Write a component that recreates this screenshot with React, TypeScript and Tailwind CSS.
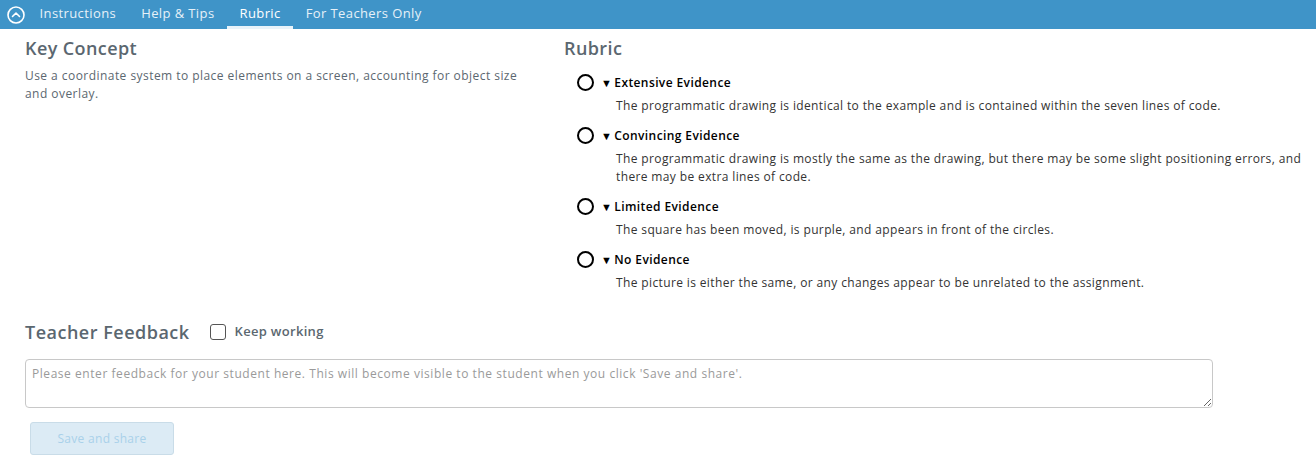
import React from 'react';

const rubric = [
  {
    title: 'Extensive Evidence',
    desc: 'The programmatic drawing is identical to the example and is contained within the seven lines of code.',
  },
  {
    title: 'Convincing Evidence',
    desc: 'The programmatic drawing is mostly the same as the drawing, but there may be some slight positioning errors, and there may be extra lines of code.',
  },
  {
    title: 'Limited Evidence',
    desc: 'The square has been moved, is purple, and appears in front of the circles.',
  },
  {
    title: 'No Evidence',
    desc: 'The picture is either the same, or any changes appear to be unrelated to the assignment.',
  },
];

const tabs = ['Instructions', 'Help & Tips', 'Rubric', 'For Teachers Only'];

export default function App() {
  return (
    <div className="w-[1316px] h-[468px] bg-white font-['Open_Sans',sans-serif] text-[#4d575f]">
      {/* top tab bar */}
      <div className="h-[29px] bg-[#3f94c8] flex items-stretch pl-[7px]">
        <div className="flex items-center mr-[2px]">
          <svg width="18" height="18" viewBox="0 0 18 18" fill="none" stroke="white" strokeWidth="1.6">
            <circle cx="9" cy="9" r="8" />
            <path d="M5.5 10.5 L9 7 L12.5 10.5" strokeLinecap="round" strokeLinejoin="round" />
          </svg>
        </div>
        {tabs.map((t) => (
          <div
            key={t}
            className={
              'flex items-center px-[12.5px] pt-[2px] text-[13px] tracking-[0.4px] border-b-[3px] ' +
              (t === 'Rubric'
                ? 'text-white font-medium border-[#e8f3fa]'
                : 'text-[#e6f1f8] border-transparent')
            }
          >
            {t}
          </div>
        ))}
      </div>

      <div className="flex pl-[25px] pt-[8px]">
        {/* left column */}
        <div className="w-[539px] pr-[40px]">
          <h2 className="text-[18px] tracking-[0.4px] font-semibold text-[#5b6770] leading-[22px]">Key Concept</h2>
          <p className="mt-[8px] text-[12px] tracking-[0.45px] leading-[18px] text-[#5b6770]">
            Use a coordinate system to place elements on a screen, accounting for object size and overlay.
          </p>
        </div>

        {/* rubric */}
        <div className="flex-1">
          <h2 className="text-[18px] tracking-[0.4px] font-semibold text-[#5b6770] leading-[22px]">Rubric</h2>
          <div className="mt-[14px] flex flex-col gap-[11px] pl-[13px]">
            {rubric.map((r) => (
              <div key={r.title} className="flex">
                <div className="w-[17px] h-[17px] rounded-full border-2 border-black mt-[1px] shrink-0" />
                <div className="ml-[7px] pr-[10px]">
                  <div className="text-[12px] tracking-[0.4px] font-semibold text-black leading-[20px] flex items-center">
                    <span className="text-[11px] mr-[2px]">▼</span>
                    {r.title}
                  </div>
                  <p className="mt-[4px] pl-[15px] text-[12px] tracking-[0.37px] leading-[18px] text-[#333]">{r.desc}</p>
                </div>
              </div>
            ))}
          </div>
        </div>
      </div>

      {/* teacher feedback */}
      <div className="pl-[25px] pr-[103px] mt-[29px]">
        <div className="flex items-center">
          <h2 className="text-[18px] tracking-[0.5px] font-semibold text-[#5b6770] leading-[22px]">Teacher Feedback</h2>
          <div className="ml-[20px] w-[16px] h-[16px] border border-[#555] rounded-[3px]" />
          <span className="ml-[9px] text-[13px] tracking-[0.3px] font-semibold text-[#5b6770]">Keep working</span>
        </div>
        <textarea
          className="mt-[16px] block w-[1188px] h-[49px] border border-[#c8c8c8] rounded-[4px] px-[6px] py-[5px] text-[12px] tracking-[0.55px] placeholder:text-[#9a9a9a] outline-none"
          placeholder="Please enter feedback for your student here. This will become visible to the student when you click 'Save and share'."
        />
        <button className="mt-[14px] ml-[5px] w-[144px] h-[33px] rounded-[3px] border border-[#c9dce8] bg-[#dcebf5] text-[12px] tracking-[0.3px] text-[#a9d1ea]">
          Save and share
        </button>
      </div>
    </div>
  );
}
